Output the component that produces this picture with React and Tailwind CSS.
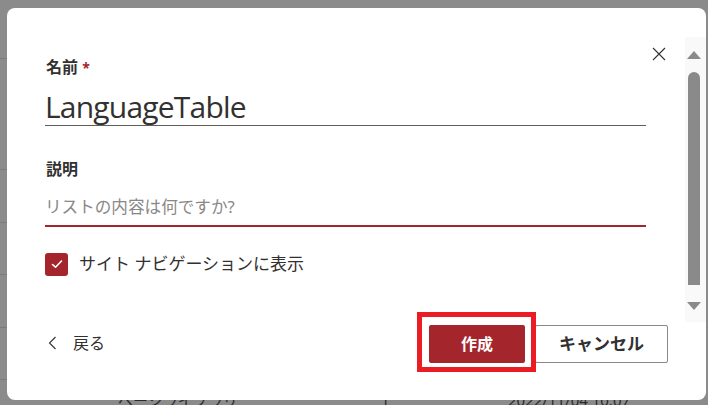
import React from "react";

const jp = { fontFamily: '"Noto Sans", "Noto Sans CJK JP", sans-serif' };

function CloseIcon() {
  return (
    <svg width="14" height="14" viewBox="0 0 14 14" fill="none" stroke="#323130" strokeWidth="1.1">
      <path d="M1 1 L13 13 M13 1 L1 13" />
    </svg>
  );
}

function Check() {
  return (
    <svg width="14" height="14" viewBox="0 0 14 14" fill="none" stroke="white" strokeWidth="1.6" strokeLinecap="round" strokeLinejoin="round">
      <path d="M2.5 7.5 L5.5 10.2 L11.5 4" />
    </svg>
  );
}

export default function App() {
  return (
    <div className="relative w-[708px] h-[405px] overflow-hidden bg-[#8b8b8b]" style={jp}>
      {/* page behind the overlay */}
      <div className="absolute left-0 top-[58px] w-[7px] h-px bg-[#7a7a7a]" />
      <div className="absolute left-0 top-[169px] w-[7px] h-px bg-[#7a7a7a]" />
      <div className="absolute left-0 top-[222px] w-[7px] h-px bg-[#7a7a7a]" />
      <div className="absolute left-0 top-[274px] w-[7px] h-px bg-[#7a7a7a]" />
      <div className="absolute left-0 top-[327px] w-[7px] h-px bg-[#7a7a7a]" />
      <div className="absolute left-0 top-[379px] w-[7px] h-px bg-[#7a7a7a]" />
      <div className="absolute left-[118px] top-[390px] text-[15px] leading-[20px] text-[#2a2a2a]">ページライブラリ</div>
      <div className="absolute left-[381px] top-[390px] text-[15px] leading-[20px] text-[#2a2a2a]">1</div>
      <div className="absolute left-[508px] top-[390px] text-[15px] leading-[20px] text-[#2a2a2a]">2022/11/04 10:07</div>

      {/* dialog */}
      <div className="absolute left-[7px] top-[8px] w-[699px] h-[392px] bg-white rounded-[8px] flex overflow-hidden">
        <div className="relative flex-1 flex flex-col pl-[38px] pr-[17px] pt-[48px]">
          <button className="absolute left-[645px] top-[39px] w-[14px] h-[14px] flex items-center justify-center">
            <CloseIcon />
          </button>

          <div className="w-[601px]">
            <div className="text-[16px] leading-[22px] font-bold text-[#323130] pl-px">
              名前 <span className="text-[#a4262c] text-[14px]">*</span>
            </div>
            <div className="h-[47px] border-b border-[#605e5c] flex items-end">
              <span className="text-[30px] leading-[36px] text-[#323130] tracking-[-0.8px]" style={{ fontFamily: '"Open Sans", "Noto Sans", sans-serif' }}>LanguageTable</span>
            </div>

            <div className="mt-[32px] text-[16px] leading-[22px] font-bold text-[#323130] pl-px">説明</div>
            <div className="mt-[15px] h-[32px] border-b-2 border-[#a4262c] flex items-start">
              <span className="text-[16.6px] leading-[24px] text-[#8a8886]">リストの内容は何ですか?</span>
            </div>

            <div className="mt-[25px] flex items-center">
              <div className="w-[23px] h-[23px] rounded-[3px] bg-[#a4262c] flex items-center justify-center">
                <Check />
              </div>
              <span className="ml-[11px] text-[17px] leading-[24px] text-[#323130]">サイト ナビゲーションに表示</span>
            </div>
          </div>

          <div className="mt-[49px] flex items-center justify-between">
            <div className="flex items-center text-[#323130] pl-[3px] -mt-[2px]">
              <svg width="9" height="14" viewBox="0 0 9 14" fill="none" stroke="#323130" strokeWidth="1.1">
                <path d="M7.5 1 L1.5 7 L7.5 13" />
              </svg>
              <span className="ml-[16px] text-[16px] leading-[24px]">戻る</span>
            </div>
            <div className="flex items-center">
              <button className="w-[96px] h-[38px] rounded-[2px] bg-[#a4262c] text-white text-[16px] font-bold">作成</button>
              <button className="ml-[10px] w-[133px] h-[38px] rounded-[2px] border border-[#8a8886] bg-white text-[#323130] text-[17px] font-bold">キャンセル</button>
            </div>
          </div>

          {/* annotation box */}
          <div className="absolute left-[410px] top-[304px] w-[119px] h-[60px] border-[5px] border-[#ec1c24] pointer-events-none" />
        </div>

        {/* scrollbar */}
        <div className="w-[21px] flex flex-col">
          <div className="h-[29px]" />
          <div className="flex-none h-[285px] bg-[#f9f9f9] flex flex-col items-center pr-[3px]">
            <svg width="14" height="8" viewBox="0 0 14 8" className="mt-[14px] flex-none">
              <path d="M0 8 L7 0 L14 8 Z" fill="#8a8a8a" />
            </svg>
            <div className="mt-[13px] flex-none w-[12px] h-[213px] rounded-t-[6px] bg-[#8a8a8a]" />
            <svg width="14" height="8" viewBox="0 0 14 8" className="mt-[17px] flex-none">
              <path d="M0 0 L14 0 L7 8 Z" fill="#8a8a8a" />
            </svg>
          </div>
        </div>
      </div>
    </div>
  );
}
